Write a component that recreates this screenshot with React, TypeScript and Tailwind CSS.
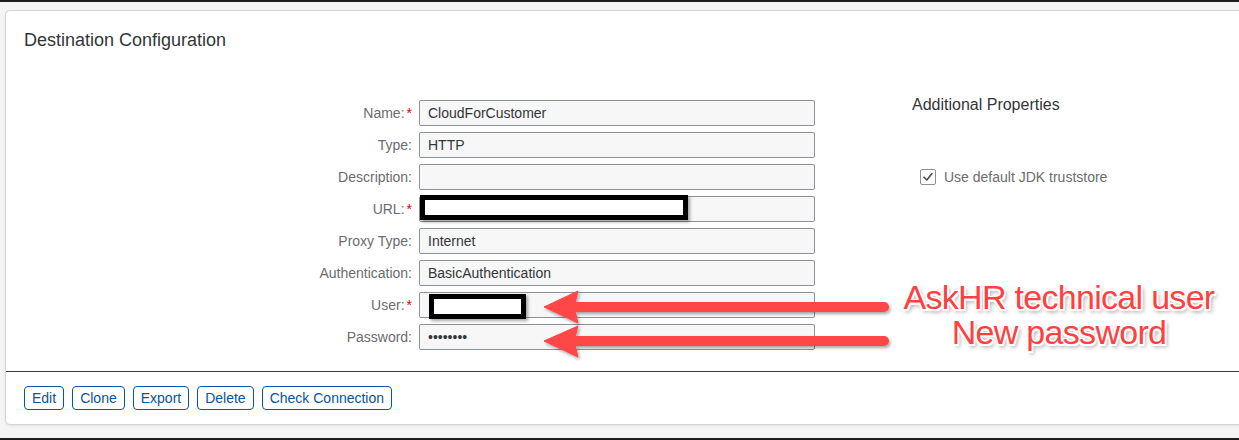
import React from "react";

const rows: { label: string; required?: boolean; value: string }[] = [
  { label: "Name:", required: true, value: "CloudForCustomer" },
  { label: "Type:", value: "HTTP" },
  { label: "Description:", value: "" },
  { label: "URL:", required: true, value: "" },
  { label: "Proxy Type:", value: "Internet" },
  { label: "Authentication:", value: "BasicAuthentication" },
  { label: "User:", required: true, value: "" },
  { label: "Password:", value: "••••••••" },
];

function RightCell({ index }: { index: number }) {
  if (index === 0) {
    return (
      <div className="pl-[97px] self-start mt-[-4px] text-[16px] leading-[18px] text-[#32363a] whitespace-nowrap">
        Additional Properties
      </div>
    );
  }
  if (index === 2) {
    return (
      <div className="pl-[105px] flex items-center gap-[8px]">
        <span className="w-[16px] h-[16px] border border-[#89919a] rounded-[2px] bg-white flex items-center justify-center">
          <svg width="12" height="12" viewBox="0 0 12 12">
            <path d="M2 6.2 L4.8 9 L10 2.6" fill="none" stroke="#4a4d50" strokeWidth="1.6" strokeLinecap="round" strokeLinejoin="round" />
          </svg>
        </span>
        <span className="text-[14px] text-[#6a6d70] whitespace-nowrap">Use default JDK truststore</span>
      </div>
    );
  }
  return <div />;
}

export default function App() {
  return (
    <div
      className="relative w-full h-[440px] overflow-hidden bg-[#f4f4f4] flex flex-col"
      style={{ fontFamily: '"Liberation Sans", Arial, sans-serif' }}
    >
      <div className="h-[2px] bg-[#1d1d1d]" />
      <div className="mt-[8px] ml-[5px] mr-[-10px] bg-white border border-[#d5d5d5] rounded-[5px] shadow-[0_1px_2px_rgba(0,0,0,0.08)] flex flex-col">
        <div className="pl-[18px] pt-[18px] text-[18px] leading-[22px] text-[#32363a]">
          Destination Configuration
        </div>
        <div className="mt-[49px] grid grid-cols-[413px_396px_1fr] auto-rows-[26px] gap-y-[6px]">
          {rows.map((r, i) => (
            <React.Fragment key={r.label}>
              <div className="text-right pr-[7px] text-[14px] leading-[26px] text-[#6a6d70] whitespace-nowrap">
                {r.label}
                {r.required && <span className="text-[#e00000] ml-[2px]">*</span>}
              </div>
              <div className="border border-[#89919a] rounded-[2px] bg-[#f7f7f7] px-[8px] text-[14px] leading-[24px] text-[#32363a] whitespace-nowrap overflow-hidden">
                {r.value}
              </div>
              <RightCell index={i} />
            </React.Fragment>
          ))}
        </div>
        <div className="mt-[21px] h-[1px] bg-[#3a3a3a]" />
        <div className="mt-[14px] mb-[14px] pl-[18px] flex gap-[8px]">
          {["Edit", "Clone", "Export", "Delete", "Check Connection"].map((b) => (
            <button
              key={b}
              className="h-[24px] px-[7px] border border-[#0854a0] rounded-[4px] bg-white text-[14px] leading-[22px] text-[#0854a0] whitespace-nowrap"
            >
              {b}
            </button>
          ))}
        </div>
      </div>
      <div className="flex-1" />
      <div className="h-[2px] bg-[#1d1d1d]" />

      {/* Redaction boxes */}
      <div className="absolute left-[420px] top-[195px] w-[268px] h-[25px] border-[5px] border-black bg-white shadow-[2px_2px_3px_rgba(0,0,0,0.35)]" />
      <div className="absolute left-[429px] top-[294px] w-[97px] h-[25px] border-[5px] border-black bg-white shadow-[2px_2px_3px_rgba(0,0,0,0.35)]" />

      {/* Arrows */}
      <svg className="absolute left-0 top-0 pointer-events-none" width="1239" height="440">
        <defs>
          <filter id="sh" x="-10%" y="-50%" width="130%" height="200%">
            <feDropShadow dx="1.5" dy="2" stdDeviation="1.5" floodColor="#000" floodOpacity="0.35" />
          </filter>
        </defs>
        <g filter="url(#sh)" fill="#ff4646" stroke="#ff4646">
          <line x1="884" y1="307" x2="572" y2="307" strokeWidth="10" strokeLinecap="round" />
          <polygon points="544,307 578,291 574,307 578,323" strokeWidth="1" strokeLinejoin="round" />
          <line x1="884" y1="341" x2="572" y2="341" strokeWidth="10" strokeLinecap="round" />
          <polygon points="544,341 578,326 574,341 578,357" strokeWidth="1" strokeLinejoin="round" />
        </g>
      </svg>

      {/* Annotation text */}
      <div className="absolute left-[894px] top-[280px] w-[330px] text-center text-[34px] leading-[35px] text-[#ff4040] tracking-[-0.7px] [text-shadow:1.5px_0_0_#fff,-1.5px_0_0_#fff,0_1.5px_0_#fff,0_-1.5px_0_#fff,1.5px_1.5px_0_#fff,-1.5px_-1.5px_0_#fff,1.5px_-1.5px_0_#fff,-1.5px_1.5px_0_#fff,2px_3px_4px_rgba(0,0,0,0.45)]">
        <div className="whitespace-nowrap">AskHR technical user</div>
        <div className="whitespace-nowrap">New password</div>
      </div>
    </div>
  );
}
